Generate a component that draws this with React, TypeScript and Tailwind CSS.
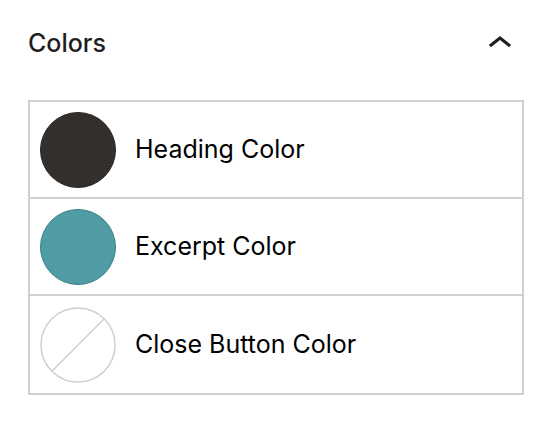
const colors = [
  { label: "Heading Color", swatch: "dark" },
  { label: "Excerpt Color", swatch: "teal" },
  { label: "Close Button Color", swatch: "none" },
];

function Swatch({ kind }: { kind: string }) {
  if (kind === "none") {
    return (
      <svg width="76" height="76" viewBox="0 0 76 76" className="shrink-0">
        <circle cx="38" cy="38" r="37" fill="#fff" stroke="#cfcfcf" strokeWidth="1.5" />
        <line x1="11.8" y1="64.2" x2="64.2" y2="11.8" stroke="#cfcfcf" strokeWidth="1.5" />
      </svg>
    );
  }
  return (
    <span
      className={
        kind === "dark"
          ? "h-[76px] w-[76px] shrink-0 rounded-full border border-[#2a2624] bg-[#332f2c]"
          : "h-[76px] w-[76px] shrink-0 rounded-full border border-[#3e8189] bg-[#4f9ca4]"
      }
    />
  );
}

export default function App() {
  return (
    <div className="h-[426px] w-[552px] bg-white px-[28px] pt-[28px] font-['Inter',sans-serif] text-[#1e1e1e]">
      <div className="mb-[40px] flex h-[32px] items-center justify-between">
        <h2 className="text-[25px] font-medium">Colors</h2>
        <svg width="48" height="48" viewBox="0 0 24 24" fill="#1e1e1e">
          <path d="M6.5 12.4L12 8l5.5 4.4-.9 1.2L12 10l-4.6 3.6-1-1.2z" />
        </svg>
      </div>

      <div className="border-2 border-[#d0d0d0]">
        {colors.map((c, i) => (
          <div
            key={c.label}
            className={
              "flex h-[97px] items-center gap-[19px] pl-[10px]" +
              (i < colors.length - 1 ? " border-b-2 border-[#d0d0d0]" : "")
            }
          >
            <Swatch kind={c.swatch} />
            <span className="text-[25px] text-black">{c.label}</span>
          </div>
        ))}
      </div>
    </div>
  );
}
